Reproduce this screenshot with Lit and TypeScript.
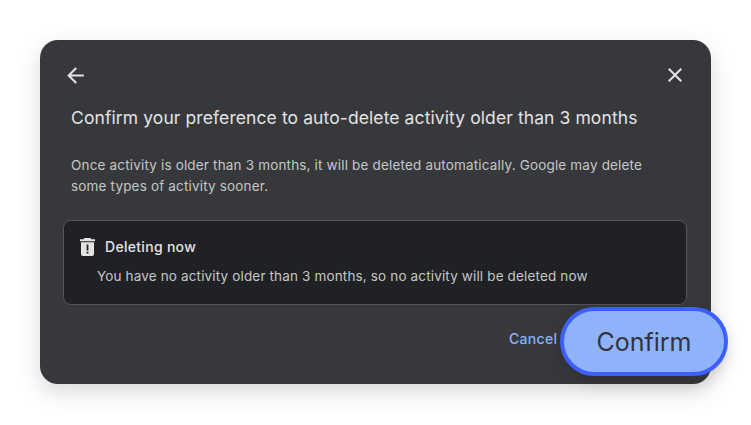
import { LitElement, html, css } from "lit";
import { customElement } from "lit/decorators.js";

@customElement("app-root")
export class AppRoot extends LitElement {
  static styles = css`
    :host { display: block; width: 751px; height: 425px; background: #fff; font-family: "Inter", "Liberation Sans", sans-serif; padding: 40px 0 0 40px; box-sizing: border-box; }
    .card { position: relative; width: 671px; height: 344px; box-sizing: border-box; background: #37383c; border-radius: 18px; box-shadow: 0 8px 22px rgba(60,64,67,.2); padding: 24px 24px 0 24px; display: flex; flex-direction: column; }
    .top { display: flex; justify-content: space-between; align-items: center; height: 22px; }
    .icon { display: block; }
    .back { margin-left: -1px; }
    h1 { margin: 20px 0 0 7px; font-size: 17.5px; line-height: 24px; font-weight: 400; color: #e3e3e3; letter-spacing: .095px; white-space: nowrap; }
    p { margin: 25px 0 0 7px; font-size: 13.5px; line-height: 21px; color: #c4c7c5; letter-spacing: .17px; white-space: nowrap; }
    .box { margin-top: 23px; margin-left: -1px; width: 624px; height: 85px; box-sizing: border-box; background: #202124; border: 1px solid #55565a; border-radius: 8px; padding: 15px 16px 0 15px; }
    .head { display: flex; align-items: center; gap: 9px; font-size: 14px; line-height: 22px; font-weight: 500; color: #e3e3e3; letter-spacing: .3px; }
    .msg { margin: 8px 0 0 18px; font-size: 13.5px; line-height: 20px; color: #c4c7c5; letter-spacing: .15px; white-space: nowrap; }
    .cancel { position: absolute; left: 469px; top: 289px; font-size: 14px; line-height: 20px; font-weight: 500; color: #8ab4f8; background: none; border: 0; padding: 0; font-family: inherit; letter-spacing: .3px; }
    .confirm { position: absolute; left: 520px; top: 267px; width: 168px; height: 69px; box-sizing: border-box; border-radius: 35px; background: #8fb3fa; border: 4px solid #3d5ffb; color: #30343c; font-family: inherit; font-size: 25px; font-weight: 420; padding: 0; box-shadow: 0 6px 16px rgba(0,0,0,.16); }
  `;

  render() {
    return html`
      <div class="card">
        <div class="top">
          <svg class="icon back" width="25" height="25" viewBox="0 0 24 24" fill="#e3e3e3"><path d="M20 11H7.83l5.59-5.59L12 4l-8 8 8 8 1.41-1.41L7.83 13H20z"/></svg>
          <svg class="icon" width="24" height="24" viewBox="0 0 24 24" fill="#e3e3e3"><path d="M19 6.41 17.59 5 12 10.59 6.41 5 5 6.41 10.59 12 5 17.59 6.41 19 12 13.41 17.59 19 19 17.59 13.41 12z"/></svg>
        </div>
        <h1>Confirm your preference to auto-delete activity older than 3 months</h1>
        <p>Once activity is older than 3 months, it will be deleted automatically. Google may delete<br />some types of activity sooner.</p>
        <div class="box">
          <div class="head">
            <svg class="icon" width="17" height="20" viewBox="0 0 17 20"><path fill="#e3e3e3" d="M5.5 1h6l1 1.2H16v2H1v-2h3.5zM2 5.2h13V17a2 2 0 0 1-2 2H4a2 2 0 0 1-2-2z"/><path fill="#202124" d="M7.6 7.5h1.8v6H7.6zM7.6 14.8h1.8v1.8H7.6z"/></svg>
            Deleting now
          </div>
          <div class="msg">You have no activity older than 3 months, so no activity will be deleted now</div>
        </div>
        <button class="cancel">Cancel</button>
        <button class="confirm">Confirm</button>
      </div>
    `;
  }
}
